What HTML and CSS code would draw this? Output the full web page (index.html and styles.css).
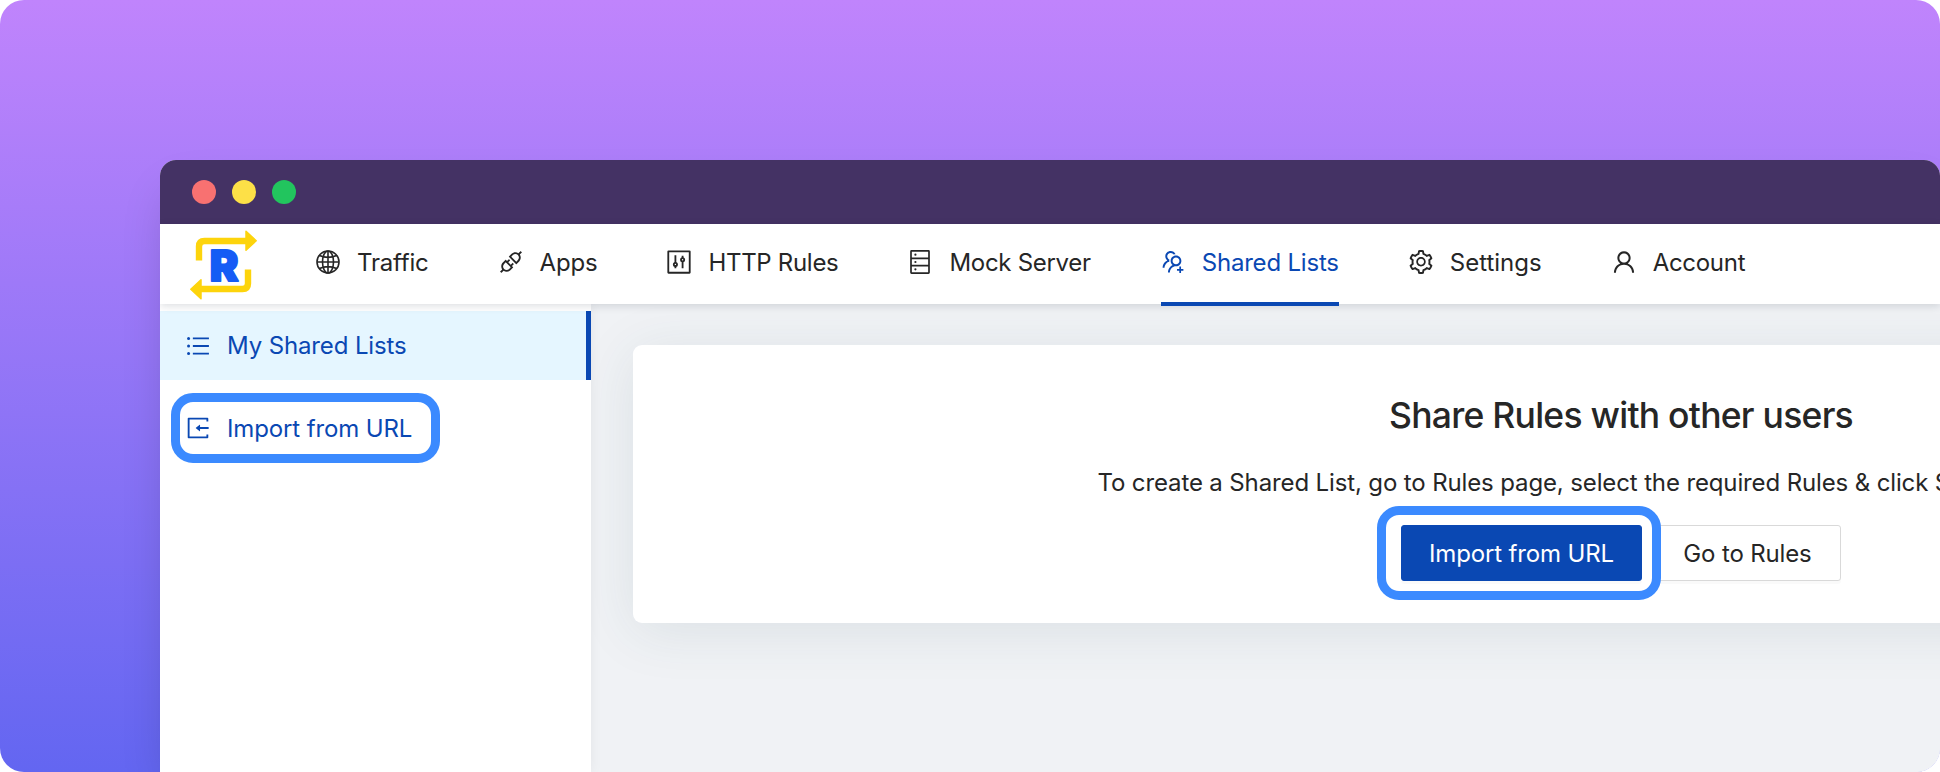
FILE: index.html
```
<!DOCTYPE html>
<html lang="en">
<head>
  <meta charset="UTF-8" />
  <meta name="viewport" content="width=device-width, initial-scale=1.0"/>
  <title>Shared Lists</title>
  <link rel="stylesheet" href="styles.css">
</head>
<body>
  <div class="stage">
    <div class="window">
      <div class="titlebar">
        <span class="dot red"></span>
        <span class="dot yellow"></span>
        <span class="dot green"></span>
      </div>

      <header class="navbar">
        <div class="logo">
          <svg width="68" height="70" viewBox="0 0 68 70">
            <g fill="none" stroke="#fdd40c" stroke-width="6.4" stroke-linejoin="round">
              <path d="M9 30.500V16.500Q9 11 14.500 11H57"/>
              <path d="M58 39.500V53.500Q58 59 52.500 59H10"/>
            </g>
            <g fill="#fdd40c" stroke="#fdd40c" stroke-width="1.500" stroke-linejoin="round">
              <path d="M56 1.200L66.200 10.800L56 20.300z"/>
              <path d="M11 49.700L.8 59.200L11 68.800z"/>
            </g>
            <text class="logo-letter" x="34" y="51" text-anchor="middle">R</text>
          </svg>
        </div>

        <nav class="menu">
          <a class="tab traffic">
            <svg class="icon" viewBox="0 0 24 24" fill="none" stroke="currentColor" stroke-width="1.600">
              <circle cx="12" cy="12" r="11"/>
              <ellipse cx="12" cy="12" rx="5.500" ry="11"/>
              <path d="M12 1v22M1 12h22M3.400 5.600q8.600 3.600 17.200 0M3.400 18.400q8.600-3.600 17.200 0"/>
            </svg>
            <span>Traffic</span>
          </a>
          <a class="tab apps">
            <svg class="icon" viewBox="64 64 896 896" fill="currentColor"><path d="M917.7 148.8l-42.4-42.4c-1.6-1.6-3.6-2.3-5.700-2.300s-4.100.8-5.700 2.300l-76.100 76.100a199.270 199.270 0 00-112.100-34.300c-51.200 0-102.400 19.500-141.500 58.600L432.300 308.700a8.030 8.030 0 000 11.300L704 591.700c1.600 1.600 3.600 2.300 5.700 2.300 2 0 4.100-.8 5.700-2.300l101.900-101.900c68.900-69 77-175.700 24.300-253.500l76.100-76.100c3.100-3.200 3.100-8.300 0-11.400zM769.100 441.700l-59.400 59.400-186.800-186.800 59.400-59.400c24.900-24.900 58.100-38.700 93.400-38.700 35.300 0 68.400 13.700 93.400 38.700 24.900 24.900 38.700 58.100 38.700 93.400 0 35.300-13.800 68.400-38.700 93.400zm-190.200 105a8.030 8.030 0 00-11.300 0L501 613.300 410.700 523l66.700-66.700c3.100-3.100 3.100-8.200 0-11.300L441 408.600a8.030 8.030 0 00-11.300 0L363 475.300l-43-43a7.850 7.850 0 00-5.700-2.300c-2 0-4.100.8-5.700 2.300L206.800 534.200c-68.900 69-77 175.700-24.300 253.500l-76.100 76.100a8.030 8.030 0 000 11.300l42.400 42.400c1.600 1.600 3.600 2.300 5.700 2.300s4.100-.8 5.700-2.300l76.100-76.100c33.700 22.900 72.900 34.300 112.100 34.300 51.200 0 102.400-19.500 141.500-58.600l101.900-101.900c3.100-3.100 3.100-8.200 0-11.300l-43-43 66.700-66.700c3.100-3.100 3.100-8.200 0-11.300l-36.600-36.200zM441.700 769.100a131.320 131.320 0 01-93.400 38.700c-35.300 0-68.400-13.700-93.400-38.700a131.320 131.320 0 01-38.700-93.400c0-35.300 13.700-68.400 38.700-93.400l59.400-59.400 186.800 186.800-59.400 59.400z"/></svg>
            <span>Apps</span>
          </a>
          <a class="tab rules">
            <svg class="icon" viewBox="64 64 896 896" fill="none" stroke="currentColor" stroke-width="68">
              <rect x="112" y="112" width="800" height="800" rx="8"/>
              <path d="M378 260v285M378 660v84M646 280v92M646 488v256"/>
              <circle cx="378" cy="602" r="60"/>
              <circle cx="646" cy="430" r="60"/>
            </svg>
            <span>HTTP Rules</span>
          </a>
          <a class="tab mock">
            <svg class="icon" viewBox="0 0 24 24" fill="none" stroke="currentColor" stroke-width="1.700">
              <rect x="3" y=".9" width="18" height="22.200" rx=".5"/>
              <path d="M3 8.300h18M3 15.700h18"/>
              <g fill="currentColor" stroke="none">
                <circle cx="7.400" cy="4.700" r="1.100"/>
                <circle cx="7.400" cy="12" r="1.100"/>
                <circle cx="7.400" cy="19.300" r="1.100"/>
              </g>
            </svg>
            <span>Mock Server</span>
          </a>
          <a class="tab shared active">
            <svg class="icon" viewBox="64 64 896 896" fill="currentColor"><path d="M892 772h-80v-80c0-4.400-3.600-8-8-8h-48c-4.400 0-8 3.600-8 8v80h-80c-4.400 0-8 3.600-8 8v48c0 4.400 3.600 8 8 8h80v80c0 4.400 3.600 8 8 8h48c4.400 0 8-3.600 8-8v-80h80c4.400 0 8-3.600 8-8v-48c0-4.400-3.600-8-8-8zM373.500 498.400c-.9-8.700-1.400-17.500-1.400-26.400 0-15.900 1.500-31.400 4.300-46.500.7-3.600-1.200-7.300-4.500-8.800-13.600-6.100-26.100-14.500-36.900-25.100a127.540 127.540 0 01-38.700-95.400c.9-32.100 13.800-62.600 36.300-85.600 24.700-25.300 57.900-39.100 93.200-38.700 31.900.3 62.700 12.600 86 34.400 7.900 7.400 14.700 15.600 20.400 24.400 2 3.100 5.900 4.400 9.300 3.200 17.600-6.100 36.200-10.400 55.300-12.400 5.600-.6 8.800-6.600 6.300-11.600-32.500-64.300-98.900-108.700-175.700-109.900-110.800-1.700-203.200 89.200-203.200 200 0 62.800 28.900 118.800 74.200 155.500-31.800 14.700-61.100 35-86.500 60.400-54.800 54.700-85.800 126.900-87.800 204a8 8 0 008 8.200h56.100c4.300 0 7.900-3.400 8-7.700 1.900-58 25.400-112.300 66.700-153.500 29.400-29.400 65.400-49.800 104.700-59.700 3.800-1.100 6.400-4.800 5.900-8.800zM824 472c0-109.400-87.900-198.300-196.900-200C516.300 270.300 424 361.200 424 472c0 62.800 29 118.800 74.200 155.500a300.950 300.950 0 00-86.400 60.400C357 742.600 326 814.800 324 891.800a8 8 0 008 8.200h56c4.300 0 7.900-3.400 8-7.700 1.900-58 25.400-112.300 66.700-153.500C505.800 695.700 563 672 624 672c110.400 0 200-89.500 200-200zm-109.500 90.500C690.300 586.700 658.200 600 624 600s-66.300-13.300-90.500-37.500a127.260 127.260 0 01-37.500-91.800c.3-32.800 13.400-64.500 36.300-88 24-24.600 56.100-38.300 90.400-38.700 33.900-.3 66.800 12.900 91 36.600 24.800 24.300 38.400 56.800 38.400 91.400-.1 34.200-13.400 66.300-37.600 90.500z"/></svg>
            <span>Shared Lists</span>
          </a>
          <a class="tab settings">
            <svg class="icon" viewBox="64 64 896 896" fill="currentColor"><path d="M924.800 625.700l-65.500-56c3.100-19 4.700-38.400 4.700-57.800s-1.600-38.800-4.700-57.800l65.500-56a32.030 32.030 0 009.300-35.200l-.9-2.600a443.740 443.740 0 00-79.700-137.900l-1.800-2.100a32.120 32.120 0 00-35.100-9.500l-81.300 28.900c-30-24.600-63.500-44-99.700-57.600l-15.700-85a32.050 32.050 0 00-25.800-25.700l-2.700-.5c-52.100-9.400-106.900-9.400-159 0l-2.700.5a32.050 32.050 0 00-25.800 25.700l-15.800 85.400a351.860 351.860 0 00-99 57.400l-81.900-29.100a32 32 0 00-35.100 9.500l-1.800 2.100a446.020 446.020 0 00-79.700 137.900l-.9 2.600c-4.500 12.500-.8 26.500 9.300 35.200l66.300 56.600c-3.100 18.800-4.600 38-4.600 57.100 0 19.200 1.500 38.400 4.600 57.100L99 625.500a32.030 32.030 0 00-9.300 35.200l.9 2.600c18.100 50.400 44.900 96.900 79.700 137.900l1.800 2.100a32.120 32.120 0 0035.100 9.500l81.900-29.100c29.800 24.500 63.100 43.900 99 57.400l15.800 85.400a32.050 32.050 0 0025.800 25.700l2.700.5a449.400 449.400 0 00159 0l2.700-.5a32.050 32.050 0 0025.800-25.700l15.700-85a350 350 0 0099.700-57.600l81.300 28.900a32 32 0 0035.100-9.500l1.800-2.100c34.800-41.100 61.600-87.500 79.700-137.900l.9-2.600c4.500-12.300.8-26.300-9.300-35zM788.300 465.900c2.500 15.100 3.800 30.600 3.800 46.100s-1.300 31-3.800 46.100l-6.600 40.100 74.700 63.900a370.030 370.030 0 01-42.600 73.600L721 702.800l-31.400 25.800c-23.900 19.600-50.500 35-79.300 45.800l-38.100 14.300-17.900 97a377.500 377.500 0 01-85 0l-17.900-97.200-37.800-14.500c-28.500-10.800-55-26.200-78.700-45.700l-31.400-25.900-93.400 33.200c-17-22.900-31.200-47.600-42.600-73.600l75.500-64.500-6.500-40c-2.400-14.900-3.700-30.300-3.700-45.500 0-15.300 1.200-30.600 3.700-45.500l6.500-40-75.500-64.500c11.300-26.100 25.600-50.700 42.600-73.600l93.400 33.200 31.400-25.900c23.700-19.500 50.200-34.900 78.700-45.700l37.900-14.300 17.900-97.200c28.100-3.200 56.800-3.200 85 0l17.900 97 38.100 14.300c28.700 10.800 55.400 26.200 79.300 45.800l31.400 25.800 92.800-32.900c17 22.900 31.200 47.600 42.600 73.600L781.800 426l6.500 39.900zM512 326c-97.200 0-176 78.800-176 176s78.800 176 176 176 176-78.800 176-176-78.800-176-176-176zm79.200 255.200A111.600 111.600 0 01512 614c-29.900 0-58-11.700-79.200-32.800A111.600 111.600 0 01400 502c0-29.900 11.700-58 32.800-79.200C454 401.600 482.100 390 512 390c29.900 0 58 11.600 79.200 32.800A111.600 111.600 0 01624 502c0 29.900-11.700 58-32.800 79.200z"/></svg>
            <span>Settings</span>
          </a>
          <a class="tab account">
            <svg class="icon" viewBox="64 64 896 896" fill="currentColor"><path d="M858.500 763.600a374 374 0 00-80.600-119.500 375.630 375.630 0 00-119.500-80.600c-.4-.2-.8-.3-1.200-.5C719.500 518 760 444.700 760 362c0-137-111-248-248-248S264 225 264 362c0 82.700 40.500 156 102.800 201.100-.4.2-.8.3-1.200.5-44.800 18.900-85 46-119.500 80.600a375.630 375.630 0 00-80.600 119.500A371.700 371.700 0 00136 901.800a8 8 0 008 8.200h60c4.400 0 7.900-3.500 8-7.800 2-77.200 33-149.500 87.800-204.300 56.700-56.700 132-87.900 212.200-87.900s155.500 31.200 212.200 87.900C779 752.700 810 825 812 902.200c.1 4.400 3.600 7.800 8 7.800h60a8 8 0 008-8.200c-1-47.800-10.900-94.300-29.500-138.200zM512 534c-45.900 0-89.100-17.900-121.600-50.400S340 407.900 340 362c0-45.900 17.900-89.100 50.400-121.600S466.100 190 512 190s89.100 17.900 121.600 50.400S684 316.100 684 362c0 45.900-17.900 89.100-50.400 121.600S557.900 534 512 534z"/></svg>
            <span>Account</span>
          </a>
        </nav>
      </header>

      <div class="body">
        <aside class="sidebar">
          <a class="side-item selected">
            <svg class="icon" viewBox="64 64 896 896" fill="currentColor">
              <path d="M912 192H328c-4.400 0-8 3.600-8 8v56c0 4.400 3.600 8 8 8h584c4.400 0 8-3.600 8-8v-56c0-4.400-3.600-8-8-8zm0 284H328c-4.400 0-8 3.600-8 8v56c0 4.400 3.600 8 8 8h584c4.400 0 8-3.600 8-8v-56c0-4.400-3.600-8-8-8zm0 284H328c-4.400 0-8 3.600-8 8v56c0 4.400 3.600 8 8 8h584c4.400 0 8-3.600 8-8v-56c0-4.400-3.600-8-8-8z"/>
              <circle cx="160" cy="228" r="56"/>
              <circle cx="160" cy="512" r="56"/>
              <circle cx="160" cy="796" r="56"/>
            </svg>
            <span>My Shared Lists</span>
          </a>
          <a class="side-item highlight">
            <svg class="icon" viewBox="64 64 896 896" fill="currentColor"><path d="M888.300 757.400h-53.800c-4.200 0-7.700 3.500-7.700 7.700v61.800H197.100V197.100h629.800v61.800c0 4.200 3.500 7.700 7.700 7.700h53.800c4.200 0 7.700-3.400 7.700-7.700V158.700c0-17-13.700-30.700-30.700-30.700H158.700c-17 0-30.700 13.700-30.700 30.700v706.600c0 17 13.700 30.700 30.700 30.700h706.600c17 0 30.700-13.700 30.700-30.700V765.100c0-4.300-3.500-7.700-7.700-7.700zM902 476H588v-76c0-6.700-7.800-10.500-13-6.300l-141.900 112a8 8 0 000 12.600l141.900 112c5.300 4.200 13 .4 13-6.300v-76h314c4.400 0 8-3.600 8-8v-56c0-4.400-3.600-8-8-8z"/></svg>
            <span>Import from URL</span>
          </a>
        </aside>

        <main class="content">
          <section class="card">
            <h1>Share Rules with other users</h1>
            <p>To create a Shared List, go to Rules page, select the required Rules &amp; click Share Rules</p>
            <div class="actions">
              <div class="ring"><button class="btn primary">Import from URL</button></div>
              <button class="btn">Go to Rules</button>
            </div>
          </section>
        </main>
      </div>
    </div>
  </div>
</body>
</html>
```
FILE: styles.css
```
* {
  box-sizing: border-box;
}

body {
  margin: 0;
  background: #fff;
  font-family: Inter, "Liberation Sans", sans-serif;
  font-size: 24px;
  letter-spacing: -0.13px;
  color: #262626;
}

.stage {
  width: 1940px;
  height: 772px;
  padding: 160px 0 0 160px;
  border-radius: 24px;
  overflow: hidden;
  background: linear-gradient(to bottom, #c084fc, #6366f1);
}

.window {
  height: 612px;
  display: flex;
  flex-direction: column;
  border-radius: 16px 16px 0 0;
  overflow: hidden;
  background: #fff;
  box-shadow: 0 25px 50px -12px rgba(0, 0, 0, 0.2);
}

.titlebar {
  flex: none;
  height: 64px;
  padding-left: 32px;
  display: flex;
  align-items: center;
  gap: 16px;
  background: #443264;
}

.dot {
  width: 24px;
  height: 24px;
  border-radius: 50%;
}

.red {
  background: #f87171;
}

.yellow {
  background: #fde047;
}

.green {
  background: #22c55e;
}

.navbar {
  flex: none;
  position: relative;
  z-index: 2;
  height: 80px;
  padding-left: 30px;
  display: flex;
  background: #fff;
  box-shadow: 0 2px 8px rgba(0, 21, 41, 0.14);
}

.logo {
  width: 126px;
  padding-top: 6px;
}

.logo-letter {
  font-size: 43px;
  font-weight: 900;
  fill: #155cf5;
  stroke: #155cf5;
  stroke-width: 2px;
  stroke-linejoin: round;
}

.menu {
  display: flex;
  gap: 70px;
}

.tab {
  height: 82px;
  padding-bottom: 6px;
  display: flex;
  align-items: center;
  gap: 17px;
  white-space: nowrap;
  letter-spacing: -0.2px;
}

.rules,
.mock,
.account {
  letter-spacing: -0.3px;
}

.settings {
  letter-spacing: 0;
}

.tab.active {
  color: #0a48b3;
  border-bottom: 4px solid #0a48b3;
  padding-bottom: 2px;
}

.icon {
  flex: none;
  width: 24px;
  height: 24px;
}

.body {
  flex: 1;
  display: flex;
}

.sidebar {
  flex: none;
  position: relative;
  z-index: 1;
  width: 431px;
  padding-top: 7px;
  background: #fff;
  color: #0a48b3;
  box-shadow: 0 0 12px rgba(0, 0, 0, 0.06);
}

.side-item {
  display: flex;
  align-items: center;
  gap: 17px;
  white-space: nowrap;
}

.selected {
  height: 69px;
  padding-left: 26px;
  background: #e5f6ff;
  border-right: 5px solid #0a48b3;
}

.highlight {
  width: 269px;
  height: 70px;
  margin: 13px 0 0 11px;
  padding-left: 6px;
  border: 9px solid #3b8aff;
  border-radius: 22px;
}

.content {
  flex: 1;
  min-width: 0;
  padding: 41px 0 0 42px;
  overflow: hidden;
  background: #f0f2f5;
}

.card {
  width: 1976px;
  height: 278px;
  padding-top: 49px;
  display: flex;
  flex-direction: column;
  align-items: center;
  background: #fff;
  border-radius: 9px;
  box-shadow: 0 8px 56px rgba(40, 75, 85, 0.1);
}

h1 {
  margin: 0;
  font-size: 35.5px;
  line-height: 44px;
  font-weight: 500;
  letter-spacing: -0.75px;
  white-space: nowrap;
}

p {
  width: 1047px;
  margin: 27px 0 0;
  line-height: 36px;
  white-space: nowrap;
}

.actions {
  display: flex;
  align-items: center;
  margin-top: 5px;
}

.ring {
  width: 284px;
  height: 94px;
  margin: 0 -7px 0 -24px;
  padding-left: 5px;
  display: flex;
  align-items: center;
  justify-content: center;
  position: relative;
  border: 9px solid #3b8aff;
  border-radius: 22px;
}

.btn {
  width: 187px;
  height: 56px;
  padding: 0;
  font-family: inherit;
  font-size: 24px;
  letter-spacing: -0.15px;
  color: #262626;
  white-space: nowrap;
  background: #fff;
  border: 1px solid #d9d9d9;
  border-radius: 3px;
  box-shadow: 0 3px 0 rgba(0, 0, 0, 0.02);
}

.primary {
  width: 241px;
  color: #fff;
  background: #0a48b3;
  border-color: #0a48b3;
}
```
